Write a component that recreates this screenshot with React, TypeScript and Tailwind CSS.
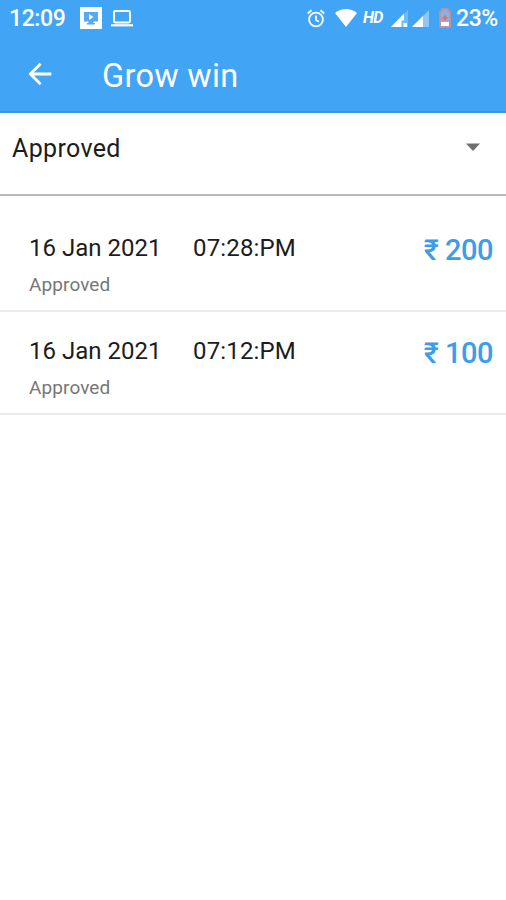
import React, { useState } from 'react';

interface Transaction {
  id: number;
  date: string;
  time: string;
  status: string;
  amount: number;
}

const transactions: Transaction[] = [
  { id: 1, date: '16 Jan 2021', time: '07:28:PM', status: 'Approved', amount: 200 },
  { id: 2, date: '16 Jan 2021', time: '07:12:PM', status: 'Approved', amount: 100 },
];

const StatusBar: React.FC = () => (
  <div className="h-9 pl-[9px] pr-2 flex items-center text-white font-medium">
    <span className="w-[57px] pt-[2px] text-[23px] leading-9 tracking-[-0.4px]">12:09</span>
    <svg className="ml-[14px] w-[22px] h-[22px]" viewBox="0 0 22 22">
      <rect width="22" height="22" fill="#fff" />
      <path d="M4 5h14v9.500h-4.500V16H15v1.500H7V16h1.500v-1.500H4z" fill="#55aaf4" />
      <path d="M9 7l4.500 3L9 13z" fill="#fff" />
    </svg>
    <svg className="ml-[9px] w-[22px] h-[17px]" viewBox="0 0 22 17" fill="none" stroke="#fff">
      <rect x="3" y="1" width="16" height="11.500" rx="1.200" strokeWidth="1.900" />
      <path d="M0 15.300h22" strokeWidth="2.200" />
    </svg>

    <div className="ml-auto flex items-center">
      <svg className="w-[18px] h-[19px]" viewBox="0 0 18 19" fill="none" stroke="#fff" strokeWidth="1.800">
        <circle cx="9" cy="10.500" r="6.900" />
        <path d="M9 6.500v4.500l3 1.700M.8 4.500l3.700-3.200M17.200 4.500l-3.700-3.200" />
      </svg>
      <svg className="ml-[10px] w-[22px] h-[18px]" viewBox="0 0 22 18">
        <path d="M0 4C6.500-1.200 15.500-1.200 22 4L11 18z" fill="#fff" />
      </svg>
      <span className="ml-[6px] w-[21px] text-[16px] leading-9 italic font-bold tracking-[-0.6px]">HD</span>
      <svg className="ml-[7px] w-[17px] h-[17px]" viewBox="0 0 17 17">
        <path d="M17 0v17H0z" fill="#fff" fillOpacity=".25" />
        <path d="M13 3.500v7h-2.500V17H0z" fill="#fff" />
        <path d="M12.500 13h3.500v4h-3.500z" fill="#fff" />
      </svg>
      <svg className="ml-[4px] w-[17px] h-[17px]" viewBox="0 0 17 17">
        <path d="M17 0v17H0z" fill="#fff" fillOpacity=".4" />
        <path d="M11 6v11H0z" fill="#fff" />
      </svg>
      <svg className="ml-[10px] w-[12px] h-[20px]" viewBox="0 0 12 20">
        <path d="M1 3.500h2V1h6v2.500h2V19H1z" fill="#86b3e2" stroke="#d98b8a" strokeWidth="1.700" strokeLinejoin="round" />
        <path d="M2 14h8v4H2z" fill="#fff" />
        <path d="M6 7.500v5M3.500 10h5" stroke="#e8705f" strokeWidth="2.200" />
      </svg>
      <span className="ml-[5px] w-[42px] pt-[2px] text-[23px] leading-9 tracking-[-0.4px]">23%</span>
    </div>
  </div>
);

const Header: React.FC = () => (
  <header className="h-[113px] bg-[#42a4f5] border-b-2 border-[#3897e8]">
    <StatusBar />
    <div className="flex items-center h-[76px] pl-7">
      <button aria-label="Back" className="w-6 h-6">
        <svg className="w-6 h-6" viewBox="0 0 24 24" fill="none" stroke="#fff" strokeWidth="2.800">
          <path d="M23.300 12H2.500M12.600 1.800L2.400 12l10.200 10.200" />
        </svg>
      </button>
      <h1 className="ml-[50px] pt-[3px] text-[32.500px] leading-[38px] tracking-[0.3px] text-white">Grow win</h1>
    </div>
  </header>
);

const TransactionRow: React.FC<{ item: Transaction }> = ({ item }) => (
  <li className="h-[103px] border-b-2 border-[#ebebeb] pl-[29px] pr-[13px] pt-6 flex justify-between">
    <div>
      <div className="flex text-[24px] leading-[30px] text-[#1c1c1c]">
        <span className="w-[164px]">{item.date}</span>
        <span className="tracking-[0.15px]">{item.time}</span>
      </div>
      <div className="mt-[10px] text-[19px] leading-6 tracking-[0.1px] text-[#777777]">{item.status}</div>
    </div>
    <div className="text-[29px] leading-[34px] tracking-[-0.5px] font-medium text-[#3c9dea]">₹ {item.amount}</div>
  </li>
);

export default function App() {
  const [filter] = useState('Approved');
  const visible = transactions.filter(item => item.status === filter);

  return (
    <div className="w-full min-h-screen bg-white font-['Roboto','Noto_Sans',sans-serif]">
      <Header />
      <button className="w-full h-[83px] pl-3 pr-[26px] pt-[21px] flex items-start justify-between border-b-2 border-[#b9b9b9]">
        <span className="text-[25px] leading-[30px] tracking-[0.35px] text-[#1c1c1c]">{filter}</span>
        <svg className="mt-[9px] w-[14px] h-[8px]" viewBox="0 0 14 8">
          <path d="M0 0.500h14L7 8z" fill="#707070" />
        </svg>
      </button>
      <ul className="pt-[13px]">
        {visible.map(item => (
          <TransactionRow key={item.id} item={item} />
        ))}
      </ul>
    </div>
  );
}
